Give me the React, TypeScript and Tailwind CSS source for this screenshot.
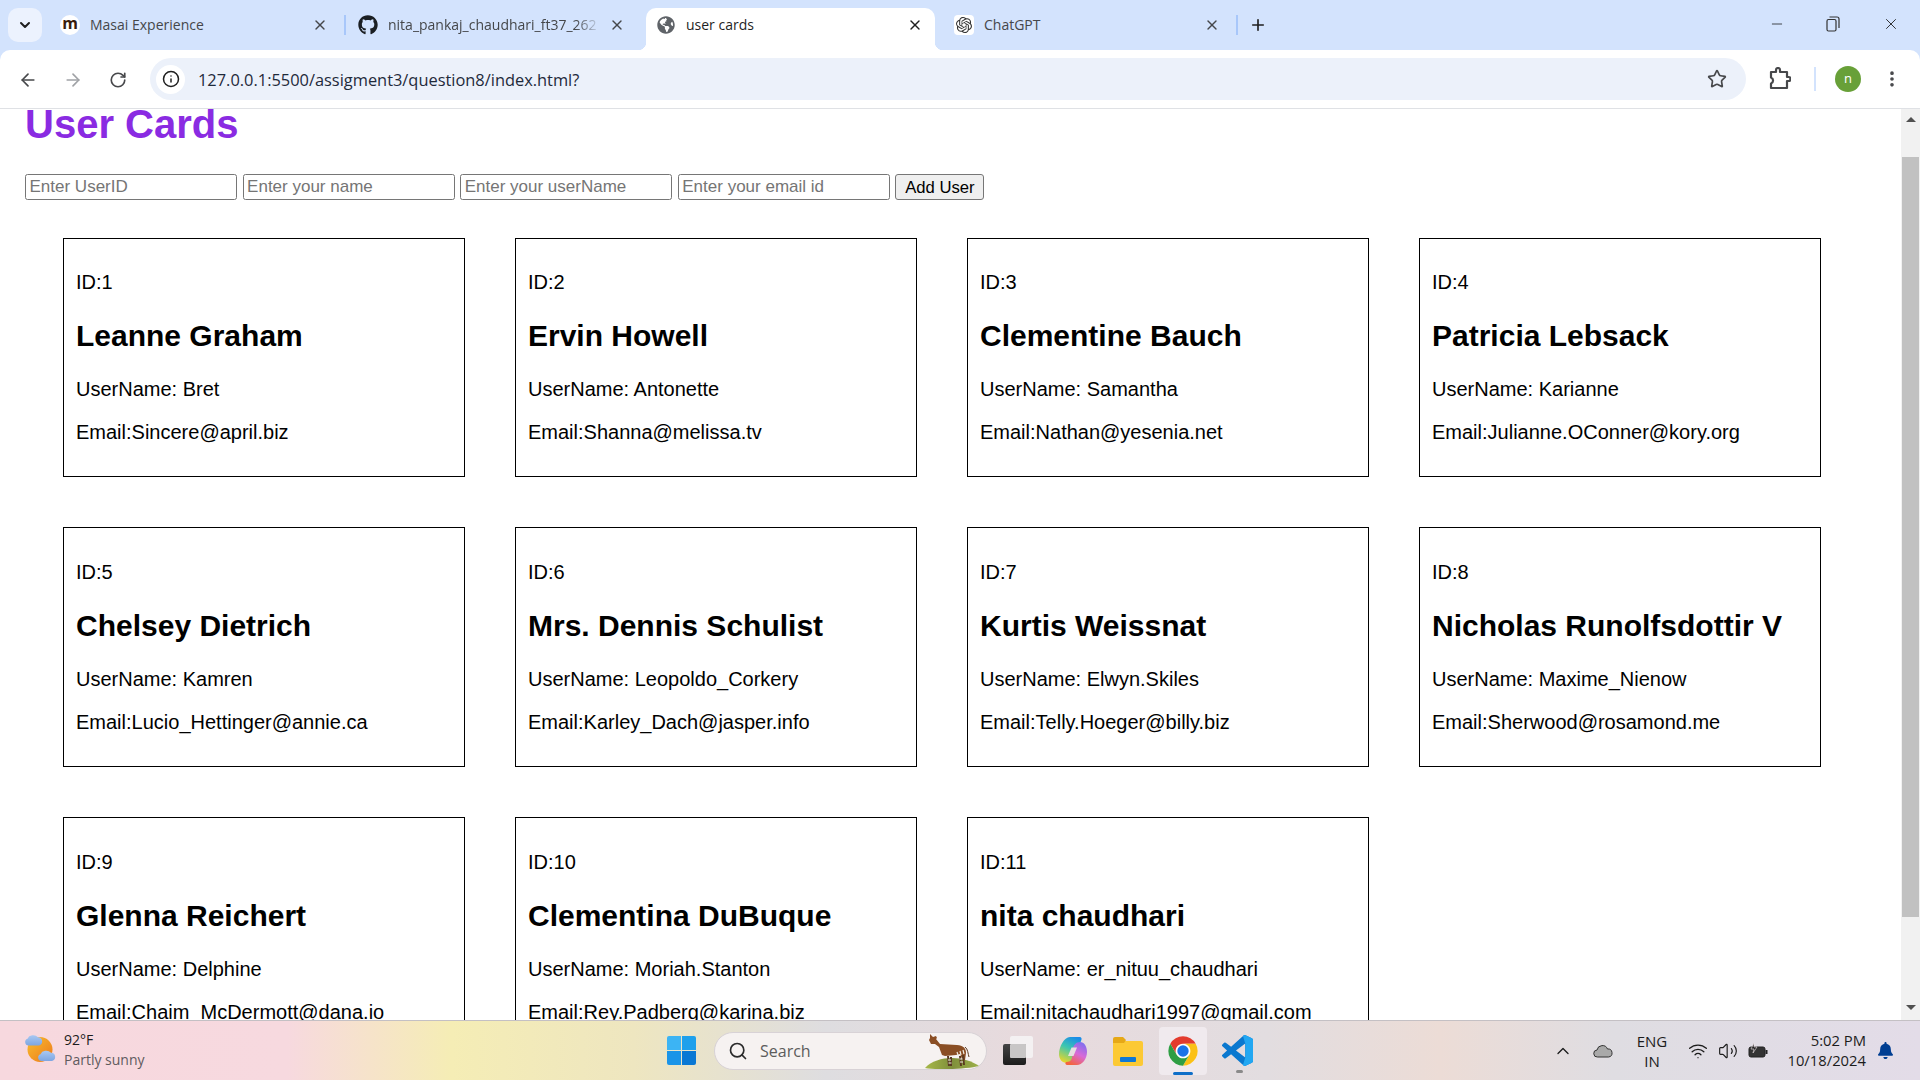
import { ArrowLeft, ArrowRight, ChevronDown, ChevronUp, EllipsisVertical, Info, Minus, Plus, RotateCw, Search, Star, Volume2, Wifi, X } from "lucide-react";
import { FaBell, FaGithub, FaGlobeAmericas } from "react-icons/fa";
import { SiOpenai } from "react-icons/si";

const users = [
  { id: 1, name: "Leanne Graham", username: "Bret", email: "Sincere@april.biz" },
  { id: 2, name: "Ervin Howell", username: "Antonette", email: "Shanna@melissa.tv" },
  { id: 3, name: "Clementine Bauch", username: "Samantha", email: "Nathan@yesenia.net" },
  { id: 4, name: "Patricia Lebsack", username: "Karianne", email: "Julianne.OConner@kory.org" },
  { id: 5, name: "Chelsey Dietrich", username: "Kamren", email: "Lucio_Hettinger@annie.ca" },
  { id: 6, name: "Mrs. Dennis Schulist", username: "Leopoldo_Corkery", email: "Karley_Dach@jasper.info" },
  { id: 7, name: "Kurtis Weissnat", username: "Elwyn.Skiles", email: "Telly.Hoeger@billy.biz" },
  { id: 8, name: "Nicholas Runolfsdottir V", username: "Maxime_Nienow", email: "Sherwood@rosamond.me" },
  { id: 9, name: "Glenna Reichert", username: "Delphine", email: "Chaim_McDermott@dana.io" },
  { id: 10, name: "Clementina DuBuque", username: "Moriah.Stanton", email: "Rey.Padberg@karina.biz" },
  { id: 11, name: "nita chaudhari", username: "er_nituu_chaudhari", email: "nitachaudhari1997@gmail.com" },
];

const placeholders = ["Enter UserID", "Enter your name", "Enter your userName", "Enter your email id"];

function ChromeLogo({ size }: { size: number }) {
  const sector = "M43.05 13A22 22 0 0 0 4.95 13L14.47 29.5A11 11 0 0 1 24 13Z";
  return (
    <svg width={size} height={size} viewBox="0 0 48 48">
      <circle cx="24" cy="24" r="21.5" fill="#fff" />
      <path d={sector} fill="#e33b2e" />
      <path d={sector} fill="#fbc116" transform="rotate(120 24 24)" />
      <path d={sector} fill="#2f9e44" transform="rotate(240 24 24)" />
      <circle cx="24" cy="24" r="8.5" fill="#1a73e8" />
    </svg>
  );
}

function VsCode() {
  const d =
    "M23.15 2.587L18.21.21a1.494 1.494 0 0 0-1.705.29l-9.46 8.63-4.12-3.128a.999.999 0 0 0-1.276.057L.327 7.261A1 1 0 0 0 .326 8.74L3.899 12 .326 15.26a1 1 0 0 0 .001 1.479L1.65 17.94a.999.999 0 0 0 1.276.057l4.12-3.128 9.46 8.63a1.492 1.492 0 0 0 1.704.29l4.942-2.377A1.5 1.5 0 0 0 24 20.06V3.939a1.5 1.5 0 0 0-.85-1.352zm-5.146 14.861L10.826 12l7.178-5.448v10.896z";
  return (
    <svg width="31" height="31" viewBox="0 0 24 24">
      <clipPath id="vs-right">
        <path d="M16 0H24V24H16L18 17.4V6.6z" />
      </clipPath>
      <path d={d} fill="#0a78cf" />
      <path d={d} fill="#22a7f2" clipPath="url(#vs-right)" />
    </svg>
  );
}

function WeatherIcon() {
  const cloud = "M4.500 11.500a3.500 3.500 0 0 1-1-6.800a6 5 0 0 1 10.500-1.500a4 4.200 0 0 1 1 8.300z";
  return (
    <svg width="32" height="34" viewBox="0 0 32 34">
      <defs>
        <linearGradient id="sun" x1="0" y1="0" x2="1" y2="1">
          <stop offset="0" stopColor="#f9bd2e" />
          <stop offset="1" stopColor="#ec7a1c" />
        </linearGradient>
        <linearGradient id="cloud" x1="0" y1="0" x2="0" y2="1">
          <stop offset="0" stopColor="#a9c8f2" />
          <stop offset="1" stopColor="#7da6e2" />
        </linearGradient>
      </defs>
      <circle cx="16" cy="15.500" r="12.500" fill="url(#sun)" />
      <path d={cloud} fill="url(#cloud)" />
      <path d={cloud} fill="url(#cloud)" transform="translate(13 15.500)" />
    </svg>
  );
}

function Okapi() {
  return (
    <svg width="56" height="36" viewBox="0 0 56 36">
      <defs>
        <linearGradient id="hill" x1="0" y1="0" x2="1" y2="0">
          <stop offset="0" stopColor="#a7b84a" />
          <stop offset=".5" stopColor="#7f8f3a" />
          <stop offset="1" stopColor="#9cb04a" />
        </linearGradient>
      </defs>
      <path d="M1 35C7 28 18 25 28 25S48 28 55 33C44 36 14 37 1 35z" fill="url(#hill)" />
      <path d="M6 1l3 3 3-1 1 2-1 1 4 5 17 1c6 .5 9 3 9 8l-1 7-2 1-3-7-4 1-11 1-3-1-3-8-4-3-4 0-2-4 1-2z" fill="#8a4e24" />
      <path d="M41 14c3 2 3 7 4 10" fill="none" stroke="#5d3a20" strokeWidth="1" />
      <path d="M24 23l1 10M27 24l0 9M36 23l1 10M39 22l1 10" stroke="#5a3a22" strokeWidth="2" />
      <path d="M24 27h3M24.500 30h3M35.500 26h3M36 29h3M33 19l1 3M36 18l1 4M39 17l1 4" stroke="#f0ece4" strokeWidth="1.200" />
    </svg>
  );
}

function Copilot() {
  return (
    <svg width="28" height="30" viewBox="0 0 28 30">
      <defs>
        <linearGradient id="cp-a" x1=".7" y1="0" x2=".3" y2="1">
          <stop offset="0" stopColor="#1a8ce8" />
          <stop offset=".45" stopColor="#3cc6b0" />
          <stop offset="1" stopColor="#e8d62a" />
        </linearGradient>
        <linearGradient id="cp-b" x1=".8" y1="0" x2=".3" y2="1">
          <stop offset="0" stopColor="#7a6ef0" />
          <stop offset=".5" stopColor="#d86ad8" />
          <stop offset="1" stopColor="#f4643c" />
        </linearGradient>
      </defs>
      <path d="M11 1h9c3 0 3 2 2 4l-8 19c-1 2-3 3-6 3-5 0-8-4-8-9C0 11 5 1 11 1z" fill="url(#cp-a)" />
      <path d="M14 12c1-3 3-6 7-6 4 0 7 4 7 10 0 7-5 13-10 13H9c-3 0-3-2-2-3 3 0 5-1 6-4z" fill="url(#cp-b)" />
      <path d="M12.500 11.500h5.500l-3.500 8.500H9z" fill="#e7e0e2" />
    </svg>
  );
}

function FolderIcon() {
  return (
    <svg width="30" height="30" viewBox="0 0 30 30">
      <path d="M0 3a2 2 0 0 1 2-2h8l3 3H0z" fill="#e6a817" />
      <path d="M0 5h28a2 2 0 0 1 2 2v21a2 2 0 0 1-2 2H2a2 2 0 0 1-2-2z" fill="#fcc934" />
      <path d="M0 4h13l-2 3H0z" fill="#e6a817" />
      <rect x="7" y="21" width="16" height="5" rx="1" fill="#0f78d4" />
    </svg>
  );
}

function CardItem({ u }: { u: (typeof users)[number] }) {
  return (
    <div className="h-[239.600px] w-[402px] border border-black px-[12px] pt-[32.700px] text-[20px] leading-[23px] text-black">
      <p>ID:{u.id}</p>
      <h2 className="mt-[25px] text-[30px] leading-[34px] font-bold">{u.name}</h2>
      <p className="mt-[25px]">UserName: {u.username}</p>
      <p className="mt-[20px]">Email:{u.email}</p>
    </div>
  );
}

function Tab({ title, icon, width, close = "mr-[16px]", active, fade }: { title: string; icon: React.ReactNode; width: string; close?: string; active?: boolean; fade?: boolean }) {
  return (
    <div className={`relative flex h-[42px] shrink-0 items-center pb-[9px] ${width} ${active ? "rounded-t-[10px] bg-white" : ""}`}>
      {active && <span className="absolute bottom-0 -left-[8px] h-[8px] w-[8px] bg-[radial-gradient(circle_at_0_0,transparent_8px,#ffffff_8.500px)]" />}
      {active && <span className="absolute -right-[8px] bottom-0 h-[8px] w-[8px] bg-[radial-gradient(circle_at_100%_0,transparent_8px,#ffffff_8.500px)]" />}
      <span className="flex h-[20px] w-[20px] shrink-0 items-center justify-center">{icon}</span>
      <span className={`ml-[10px] min-w-0 flex-1 overflow-hidden text-[14px] whitespace-nowrap ${active ? "text-[#1f1f1f]" : "text-[#45474a]"} ${fade ? "[mask-image:linear-gradient(90deg,#000_88%,transparent)]" : ""}`}>
        {title}
      </span>
      <X size={16} strokeWidth={2} className={`ml-[8px] shrink-0 ${close} ${active ? "text-[#1f1f1f]" : "text-[#45474a]"}`} />
    </div>
  );
}

export default function App() {
  return (
    <div className="flex h-screen w-full flex-col overflow-hidden bg-white font-['Liberation_Sans',Arial,sans-serif]">
      {/* tab strip */}
      <div className="flex h-[50px] shrink-0 items-end bg-[#d3e3fd] font-['Open_Sans',sans-serif]">
        <div className="mb-[8px] ml-[8px] flex h-[34px] w-[34px] shrink-0 items-center justify-center rounded-[10px] bg-[#ecf2fe]">
          <ChevronDown size={16} strokeWidth={3} className="text-[#1f1f1f]" />
        </div>
        <div className="flex w-[18px] shrink-0" />
        <Tab
          title="Masai Experience"
          width="w-[284px]"
          icon={<span className="flex h-[20px] w-[20px] items-center justify-center rounded-full bg-white pb-[3px] text-[16px] leading-none font-bold text-[#3a1d0c]">m</span>}
        />
        <div className="mb-[15px] h-[20px] w-[2px] shrink-0 bg-[#a8c7fa]" />
        <div className="w-[12px] shrink-0" />
        <Tab title="nita_pankaj_chaudhari_ft37_262" width="w-[288px]" close="mr-[21px]" fade icon={<FaGithub size={20} className="text-[#1b1f23]" />} />
        <Tab title="user cards" width="w-[289px] pl-[10px]" close="mr-[12px]" active icon={<FaGlobeAmericas size={18} className="text-[#5f6368]" />} />
        <div className="w-[19px] shrink-0" />
        <Tab
          title="ChatGPT"
          width="w-[282px]"
          icon={
            <span className="flex h-[20px] w-[20px] items-center justify-center rounded-[4px] bg-white">
              <SiOpenai size={16} className="text-[#333]" />
            </span>
          }
        />
        <div className="mb-[15px] h-[20px] w-[2px] shrink-0 bg-[#a8c7fa]" />
        <div className="mb-[13px] flex h-[24px] w-[40px] shrink-0 items-center justify-center">
          <Plus size={18} strokeWidth={2.200} className="text-[#1f1f1f]" />
        </div>
        <div className="flex-1" />
        <div className="mb-[17px] flex items-center text-[#1f1f1f]">
          <Minus size={16} strokeWidth={1.200} className="-mr-[1px]" />
          <svg width="14" height="16" viewBox="0 0 14 16" fill="none" stroke="#333" strokeWidth="1.200" className="ml-[42px]">
            <rect x="1" y="3.500" width="9" height="11.500" rx="1.500" />
            <path d="M3.500 1h7.500a2 2 0 0 1 2 2v9" />
          </svg>
          <X size={18} strokeWidth={1.200} className="mr-[20px] ml-[42px]" />
        </div>
      </div>

      {/* toolbar */}
      <div className="bg-[#d3e3fd]">
        <div className="flex h-[58px] items-center rounded-t-[10px] bg-white">
          <ArrowLeft size={20} strokeWidth={2} className="mt-[2px] ml-[18px] text-[#47484b]" />
          <ArrowRight size={20} strokeWidth={2} className="mt-[2px] ml-[25px] text-[#a0a2a6]" />
          <RotateCw size={18} strokeWidth={2.200} className="mt-[2px] ml-[26px] text-[#47484b]" />
          <div className="ml-[23px] flex h-[42px] w-[1596px] shrink-0 items-center rounded-full bg-[#ecf1fa] pl-[6px]">
            <span className="flex h-[29px] w-[29px] items-center justify-center rounded-full bg-white">
              <Info size={18} strokeWidth={2} className="text-[#1f1f1f]" />
            </span>
            <span className="ml-[13px] pt-[2px] font-['Open_Sans',sans-serif] text-[16.400px] text-[#1f2a3a]">127.0.0.1:5500/assigment3/question8/index.html?</span>
            <Star size={20} strokeWidth={2} className="mr-[19px] ml-auto text-[#47484b]" />
          </div>
          <svg width="22" height="24" viewBox="0 0 22 24" fill="none" stroke="#47484b" strokeWidth="2.200" strokeLinejoin="round" className="ml-[23px]">
            <path d="M2 5h5V3a2 2 0 0 1 4 0v2h7v5h1.500a2 2 0 0 1 0 4H18v7H2v-4.500a3 3 0 0 0 2-3 3 3 0 0 0-2-3z" />
          </svg>
          <div className="ml-[23px] h-[24px] w-[2px] bg-[#d3e3fd]" />
          <span className="ml-[19px] flex h-[26px] w-[26px] items-center justify-center rounded-full bg-[#68a038] font-['Open_Sans',sans-serif] text-[13px] text-white">n</span>
          <EllipsisVertical size={20} strokeWidth={2.400} className="ml-[21px] text-[#47484b]" />
        </div>
      </div>

      {/* page */}
      <div className="flex min-h-0 flex-1 border-t border-[#dfe1e5]">
        <main className="min-w-0 flex-1 overflow-hidden pl-[25px]">
          <h1 className="text-[40px] leading-[30px] font-bold text-[#8a2be2]">User Cards</h1>
          <form className="mt-[35px] flex h-[26px] items-stretch gap-[5.600px]">
            {placeholders.map((p) => (
              <input
                key={p}
                placeholder={p}
                className="w-[212px] rounded-[2.500px] border border-[#767676] px-[3.500px] text-[17px] text-black outline-none placeholder:text-[#757575]"
              />
            ))}
            <button type="button" className="w-[89px] rounded-[3px] border border-[#767676] bg-[#efefef] pb-[2px] text-[16.670px] text-black">
              Add User
            </button>
          </form>
          <div className="mt-[37.700px] ml-[38px] grid w-[1758px] grid-cols-[repeat(4,402px)] gap-x-[50px] gap-y-[50px]">
            {users.map((u) => (
              <CardItem key={u.id} u={u} />
            ))}
          </div>
        </main>
        <div className="flex w-[19px] shrink-0 flex-col items-center bg-[#f1f1f1]">
          <span className="mt-[8px] h-0 w-0 border-x-[5px] border-b-[5px] border-x-transparent border-b-[#505050]" />
          <div className="mt-[35px] h-[760px] w-[17px] bg-[#c1c1c1]" />
          <span className="mt-[88px] h-0 w-0 border-x-[5px] border-t-[5px] border-x-transparent border-t-[#505050]" />
        </div>
      </div>

      {/* taskbar */}
      <div className="flex h-[60px] shrink-0 items-center border-t border-[#c4c0c4] bg-[linear-gradient(90deg,#f7d8de_0%,#f7d9df_15%,#f5edb5_23.500%,#eee6c0_33%,#dedde0_43%,#e8dadd_54%,#e2dde0_66%,#ecdcd6_75%,#dfdde2_84%,#e3dce8_100%)] font-['Open_Sans',sans-serif]">
        <div className="ml-[24px] shrink-0">
          <WeatherIcon />
        </div>
        <div className="ml-[8px] w-[603px] shrink-0 pb-[1px] text-[14px] leading-[20px]">
          <div className="text-[#1c1c1c]">92°F</div>
          <div className="text-[#5f5b5e]">Partly sunny</div>
        </div>
        {/* start button */}
        <div className="grid h-[29px] w-[29px] shrink-0 grid-cols-2 gap-[1px]">
          <span className="rounded-tl-[2px] bg-[#3cb4f4]" />
          <span className="rounded-tr-[2px] bg-[#1ea0ec]" />
          <span className="rounded-bl-[2px] bg-[#1a94e8]" />
          <span className="rounded-br-[2px] bg-[#0a78d4]" />
        </div>
        <div className="ml-[18px] flex h-[38px] w-[273px] shrink-0 items-center rounded-full border border-[#d8d2d6] bg-[#f6f2f1] pl-[13px]">
          <Search size={20} strokeWidth={2} className="text-[#2a2a2a]" />
          <span className="ml-[12px] text-[16px] text-[#5c5c5c]">Search</span>
          <span className="mr-[6px] ml-auto">
            <Okapi />
          </span>
        </div>
        <div className="relative ml-[16px] h-[29px] w-[30px] shrink-0">
          <span className="absolute top-0 right-0 h-[22px] w-[23px] rounded-[2px] bg-[#f4f1f2]" />
          <span className="absolute bottom-0 left-0 h-[21px] w-[23px] rounded-[2px] bg-[linear-gradient(180deg,#444,#1c1c1c)]" />
          <span className="absolute top-[8px] left-[7px] h-[14px] w-[16px] rounded-[1px] bg-[#c8c6c6]" />
        </div>
        <div className="ml-[26px] shrink-0">
          <Copilot />
        </div>
        <div className="ml-[26px] shrink-0">
          <FolderIcon />
        </div>
        <div className="relative ml-[16px] flex h-[48px] w-[48px] shrink-0 items-center justify-center rounded-[4px] bg-[#f0eaee]">
          <ChromeLogo size={32} />
          <span className="absolute bottom-0 left-[14px] h-[3px] w-[20px] rounded-full bg-[#0f6fc8]" />
        </div>
        <div className="relative ml-[15px] shrink-0">
          <VsCode />
          <span className="absolute -bottom-[7px] left-[14px] h-[3px] w-[7px] rounded-full bg-[#8a8a8a]" />
        </div>
        <ChevronUp size={20} strokeWidth={1.600} className="ml-[300px] shrink-0 text-[#1c1c1c]" />
        <svg width="20" height="14" viewBox="0 0 20 14" className="ml-[20px] shrink-0">
          <path d="M4.500 13a3.500 3.500 0 0 1-.5-7 5.500 5.500 0 0 1 10.500-1 4 4 0 0 1 1 8z" fill="#a9a9a9" stroke="#333" strokeWidth="1" />
        </svg>
        <div className="ml-[21px] w-[36px] shrink-0 text-center text-[15px] leading-[20px] text-[#1c1c1c]">
          ENG
          <br />
          IN
        </div>
        <Wifi size={20} strokeWidth={1.600} className="ml-[18px] shrink-0 text-[#1c1c1c]" />
        <Volume2 size={20} strokeWidth={1.400} className="ml-[10px] shrink-0 text-[#1c1c1c]" />
        <svg width="20" height="16" viewBox="0 0 20 16" className="ml-[10px] shrink-0">
          <rect x="1" y="4" width="16" height="10" rx="2" fill="#333" stroke="#222" />
          <rect x="17.500" y="7" width="2" height="4" fill="#222" />
          <path d="M6 0 3 6h3l-1 4 4-6H6z" fill="#222" stroke="#f0e6ea" strokeWidth=".6" />
        </svg>
        <div className="ml-[8px] w-[90px] shrink-0 pb-[2px] text-right text-[14.800px] leading-[20px] text-[#1c1c1c]">
          5:02 PM
          <br />
          10/18/2024
        </div>
        <FaBell size={17} className="ml-[11px] shrink-0 text-[#003e92]" />
      </div>
    </div>
  );
}
